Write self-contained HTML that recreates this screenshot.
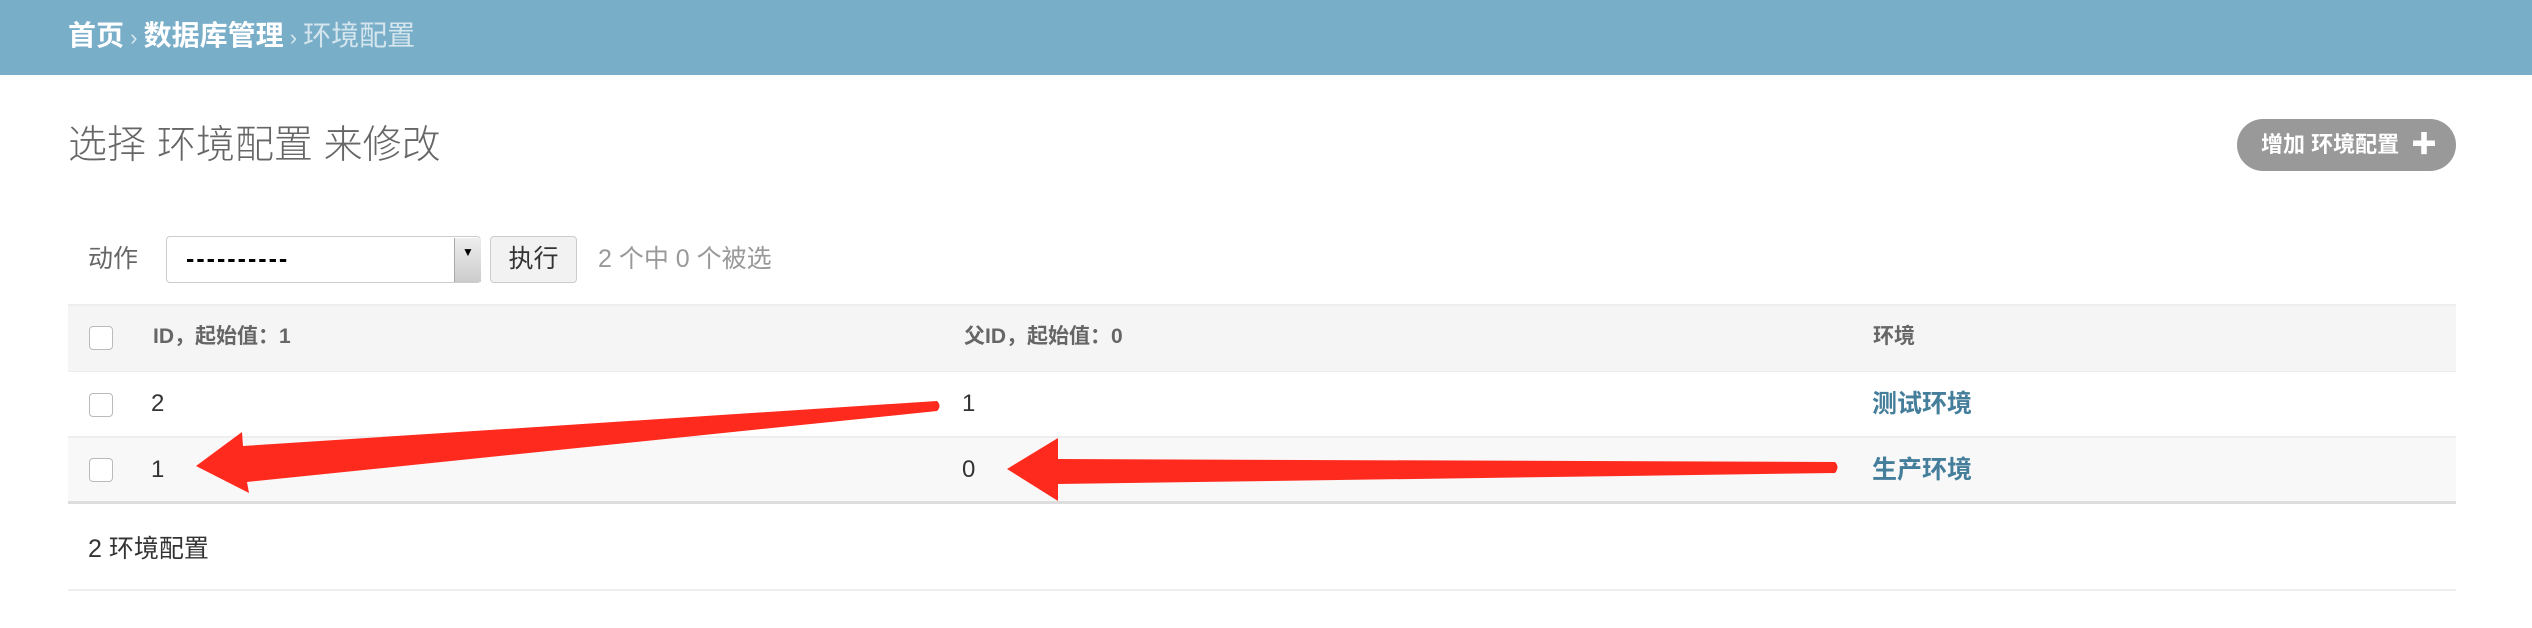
<!DOCTYPE html>
<html><head><meta charset="utf-8"><style>
body{margin:0;width:2532px;height:628px;background:#fff;position:relative;overflow:hidden;font-family:"Liberation Sans","Noto Sans CJK SC",sans-serif;}
.a{position:absolute;white-space:nowrap}
</style></head><body>
<div class="a" style="left:0;top:0;width:2532px;height:75px;background:#79aec8"></div>
<div class="a" style="left:68px;top:17px;font-size:28px;line-height:38px;color:#fff;font-weight:bold">首页<span style="font-weight:normal;color:#d8e8f0;font-size:22px"> › </span>数据库管理<span style="font-weight:normal;color:#d8e8f0;font-size:22px"> › </span><span style="color:#d4e5ee;font-weight:normal">环境配置</span></div>
<div class="a" style="left:68px;top:120px;font-size:39px;line-height:52px;color:#666;font-weight:300">选择 环境配置 来修改</div>
<div class="a" style="left:2237px;top:119px;width:219px;height:52px;border-radius:26px;background:#999;color:#fff;font-size:22px;font-weight:bold;line-height:52px;padding-left:24px;box-sizing:border-box">增加 环境配置 <span style="font-size:26px;position:absolute;left:174px;top:-1px">✚</span></div>
<div class="a" style="left:88px;top:243px;font-size:25px;line-height:32px;color:#666">动作</div>
<div class="a" style="left:166px;top:236px;width:315px;height:47px;border:1px solid #ccc;border-radius:4px;box-sizing:border-box;background:#fff"></div>
<div class="a" style="left:186px;top:243px;font-size:25px;line-height:32px;color:#000;font-weight:bold;letter-spacing:2px">----------</div>
<div class="a" style="left:454px;top:238px;width:26px;height:44px;background:linear-gradient(#eee,#ccc);border-left:1px solid #aaa;font-size:12px;text-align:center;line-height:28px">▼</div>
<div class="a" style="left:490px;top:236px;width:87px;height:47px;border:1px solid #ccc;border-radius:4px;box-sizing:border-box;background:#f2f2f2;font-size:25px;line-height:45px;text-align:center;color:#333">执行</div>
<div class="a" style="left:598px;top:243px;font-size:25px;line-height:32px;color:#999">2 个中 0 个被选</div>
<div class="a" style="left:68px;top:304px;width:2388px;height:67px;background:#f5f5f5;border-top:2px solid #eee;box-sizing:border-box"></div>
<div class="a" style="left:68px;top:371px;width:2388px;height:65px;border-top:1px solid #eee;"></div>
<div class="a" style="left:68px;top:436px;width:2388px;height:68px;background:#f8f8f8;border-top:2px solid #eee;border-bottom:3px solid #ddd;box-sizing:border-box"></div>
<div class="a" style="left:89px;top:326px;width:22px;height:22px;border:1px solid #bbb;border-radius:4px;background:#fff"></div>
<div class="a" style="left:89px;top:393px;width:22px;height:22px;border:1px solid #bbb;border-radius:4px;background:#fff"></div>
<div class="a" style="left:89px;top:458px;width:22px;height:22px;border:1px solid #bbb;border-radius:4px;background:#fff"></div>
<div class="a" style="left:153px;top:323px;font-size:21px;line-height:28px;color:#666;font-weight:bold">ID，起始值：1</div>
<div class="a" style="left:964px;top:323px;font-size:21px;line-height:28px;color:#666;font-weight:bold">父ID，起始值：0</div>
<div class="a" style="left:1873px;top:323px;font-size:21px;line-height:28px;color:#666;font-weight:bold">环境</div>
<div class="a" style="left:151px;top:388px;font-size:24px;line-height:32px;color:#333">2</div>
<div class="a" style="left:962px;top:388px;font-size:24px;line-height:32px;color:#333">1</div>
<div class="a" style="left:1872px;top:388px;font-size:25px;line-height:32px;color:#447e9b;font-weight:bold">测试环境</div>
<div class="a" style="left:151px;top:454px;font-size:24px;line-height:32px;color:#333">1</div>
<div class="a" style="left:962px;top:454px;font-size:24px;line-height:32px;color:#333">0</div>
<div class="a" style="left:1872px;top:454px;font-size:25px;line-height:32px;color:#447e9b;font-weight:bold">生产环境</div>
<div class="a" style="left:88px;top:533px;font-size:25px;line-height:32px;color:#333">2 环境配置</div>
<div class="a" style="left:68px;top:589px;width:2388px;height:2px;background:#eee"></div>
<svg class="a" style="left:0;top:0" width="2532" height="628">
<path d="M937,401 Q942,406 937,411 L247,482 L249,493 L196,466 L242,432 L243,446 Z" fill="#ff2a1e"/>
<path d="M1835,462 Q1840,467 1835,473 L1058,484 L1058,501 L1007,469 L1058,438 L1058,459 Z" fill="#ff2a1e"/>
</svg>
</body></html>
